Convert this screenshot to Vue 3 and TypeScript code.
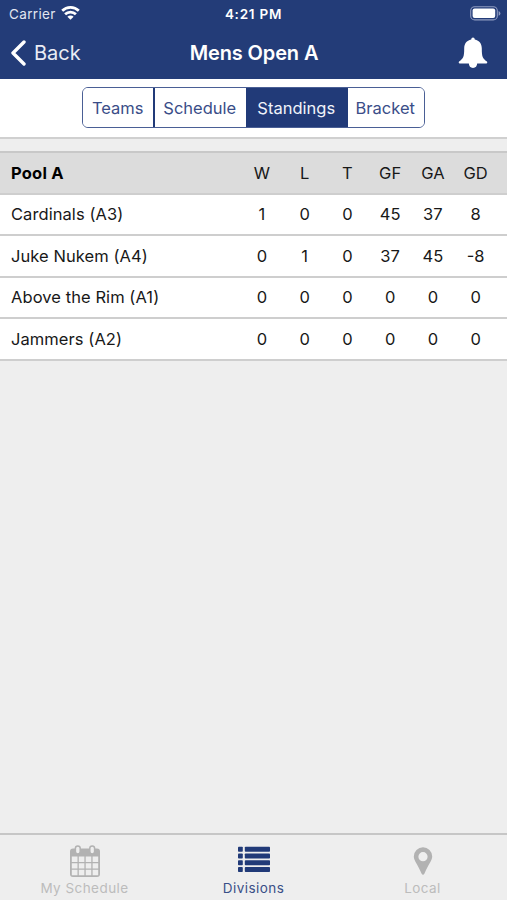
<script setup lang="ts">
interface Team {
  name: string
  stats: number[]
}

const segments: { label: string; width: number }[] = [
  { label: 'Teams', width: 69.5 },
  { label: 'Schedule', width: 93.5 },
  { label: 'Standings', width: 99.5 },
  { label: 'Bracket', width: 78.5 },
]
const active = 'Standings'

const columns = ['W', 'L', 'T', 'GF', 'GA', 'GD']
const teams: Team[] = [
  { name: 'Cardinals (A3)', stats: [1, 0, 0, 45, 37, 8] },
  { name: 'Juke Nukem (A4)', stats: [0, 1, 0, 37, 45, -8] },
  { name: 'Above the Rim (A1)', stats: [0, 0, 0, 0, 0, 0] },
  { name: 'Jammers (A2)', stats: [0, 0, 0, 0, 0, 0] },
]
</script>

<template>
  <div class="screen">
    <header class="top">
      <div class="status">
        <div class="carrier">
          <span>Carrier</span>
          <svg class="wifi" width="19" height="15" viewBox="0 0 19 15" fill="none" stroke="#fff" stroke-width="2.7">
            <path d="M1.2 5.7a11.800 11.800 0 0 1 16.600 0" />
            <path d="M4.100 9.300a7.600 7.600 0 0 1 10.800 0" />
            <path d="M6.400 11.700a4.400 4.400 0 0 1 6.200 0L9.500 14.800z" fill="#fff" stroke="none" />
          </svg>
        </div>
        <div class="time">4:21 PM</div>
        <svg class="battery" width="31" height="15" viewBox="0 0 31 15">
          <rect x="0.7" y="0.7" width="26.6" height="13.2" rx="4" fill="none" stroke="#8f9bc0" stroke-width="1.1" />
          <rect x="2.6" y="2.6" width="22.6" height="9.4" rx="2" fill="#fff" />
          <path d="M28.6 5v4.8q1.8-.8 1.8-2.4T28.6 5z" fill="#8f9bc0" />
        </svg>
      </div>
      <nav class="nav">
        <div class="back">
          <svg width="16" height="26" viewBox="0 0 16 26" fill="none" stroke="#fff" stroke-width="3.4" stroke-linecap="round" stroke-linejoin="round">
            <path d="M14 2L3 13l11 11" />
          </svg>
          <span>Back</span>
        </div>
        <h1>Mens Open A</h1>
        <svg class="bell" width="30" height="32" viewBox="0 0 30 32" fill="#fff">
          <path d="M15 .5q1.700 0 1.800 2.100c4.600.9 7 4.300 7 9 0 8 .8 10.200 5.100 12.900.7.5.4 1.900-.6 1.900H1.700c-1 0-1.300-1.400-.6-1.900 4.300-2.700 5.100-4.900 5.100-12.900 0-4.700 2.400-8.100 7-9Q13.300.5 15 .5z" />
          <path d="M10.800 26h8.400q-.2 4.900-4.200 4.900t-4.200-4.900z" />
        </svg>
      </nav>
    </header>

    <div class="filter">
      <div class="segments">
        <button
          v-for="s in segments"
          :key="s.label"
          :class="{ on: s.label === active }"
          :style="{ width: s.width + 'px' }"
        >{{ s.label }}</button>
      </div>
    </div>

    <main class="content">
      <section class="table">
        <div class="row head">
          <div class="name">Pool A</div>
          <div v-for="c in columns" :key="c" class="cell">{{ c }}</div>
        </div>
        <div v-for="t in teams" :key="t.name" class="row">
          <div class="name">{{ t.name }}</div>
          <div v-for="(v, i) in t.stats" :key="i" class="cell">{{ v }}</div>
        </div>
      </section>
    </main>

    <footer class="tabs">
      <div class="tab">
        <svg width="32" height="34" viewBox="0 0 32 34">
          <path fill="#b2b2b2" fill-rule="evenodd" d="M4 4.500h24q3 0 3 3v22.500q0 3-3 3H4q-3 0-3-3V7.500q0-3 3-3zM2.800 12.600V18h5.700v-5.400zm7 0V18h5.600v-5.400zm6.900 0V18h5.600v-5.400zm6.900 0V18h5.600v-5.400zM2.800 19.300v5.200h5.700v-5.200zm7 0v5.200h5.600v-5.200zm6.900 0v5.200h5.600v-5.200zm6.900 0v5.200h5.600v-5.200zM2.800 25.800v5.400h5.700v-5.400zm7 0v5.400h5.600v-5.400zm6.900 0v5.400h5.600v-5.400zm6.900 0v5.400h5.600v-5.400z" />
          <rect x="6.400" y="1.900" width="4.800" height="8" rx="2.400" fill="#eee" stroke="#b2b2b2" stroke-width="1.500" />
          <rect x="20.800" y="1.900" width="4.800" height="8" rx="2.400" fill="#eee" stroke="#b2b2b2" stroke-width="1.500" />
        </svg>
        <span>My Schedule</span>
      </div>
      <div class="tab current">
        <svg width="32" height="34" viewBox="0 0 32 34" fill="#213a78">
          <g v-for="n in 4" :key="n" :transform="`translate(0 ${(n - 1) * 6.8})`">
            <rect x="0" y="2.700" width="4.800" height="5" rx=".8" />
            <rect x="6.800" y="2.700" width="25.200" height="5" rx=".8" />
          </g>
        </svg>
        <span>Divisions</span>
      </div>
      <div class="tab">
        <svg width="32" height="34" viewBox="0 0 32 34">
          <path fill="#b2b2b2" fill-rule="evenodd" d="M16 3.200a9.200 9.200 0 0 1 9.200 9.200c0 4.200-3.800 7.500-7.700 17.100q-1.500 2.600-3 0C10.600 19.900 6.800 16.600 6.800 12.400A9.200 9.200 0 0 1 16 3.200zM16 8.100a4.600 4.600 0 1 0 0 9.200a4.600 4.600 0 0 0 0-9.200z" />
        </svg>
        <span>Local</span>
      </div>
    </footer>
  </div>
</template>

<style>
body {
  margin: 0;
}
</style>

<style scoped>
.screen {
  width: 507px;
  height: 900px;
  display: flex;
  flex-direction: column;
  background: #eee;
  color: #181818;
  font-family: Inter, "Liberation Sans", sans-serif;
  overflow: hidden;
}
.top {
  height: 79px;
  box-sizing: border-box;
  flex: none;
  background: #233c78;
  color: #fff;
}
.status {
  height: 27px;
  display: grid;
  grid-template-columns: 1fr auto 1fr;
  align-items: center;
  padding: 0 6px 0 9px;
  font-size: 13.5px;
}
.carrier {
  display: flex;
  align-items: center;
  gap: 5.5px;
  color: #e2e6f0;
  letter-spacing: 0.35px;
}
.wifi {
  margin-top: -2px;
}
.time {
  margin-right: 3px;
  font-weight: 600;
  letter-spacing: 0.75px;
}
.battery {
  justify-self: end;
}
.nav {
  height: 51px;
  display: grid;
  grid-template-columns: 1fr auto 1fr;
  align-items: center;
  padding: 0 19px 0 10px;
}
.back {
  display: flex;
  align-items: center;
  gap: 8px;
  font-size: 20px;
  color: #e9ecf5;
}
h1 {
  margin: 0 0 0 10px;
  font-size: 20px;
  line-height: 24px;
  font-weight: 600;
  letter-spacing: -0.13px;
}
.bell {
  justify-self: end;
}
.filter {
  height: 60px;
  box-sizing: border-box;
  flex: none;
  display: flex;
  justify-content: center;
  padding-top: 8px;
  background: #fff;
  border-bottom: 2px solid #d0d0d0;
}
.segments {
  display: flex;
  width: 343px;
  height: 41px;
  box-sizing: border-box;
  border: 1px solid #4a5f95;
  border-radius: 6px;
  overflow: hidden;
}
button {
  flex: none;
  box-sizing: border-box;
  margin: 0;
  padding: 0;
  border: 0;
  background: #fff;
  color: #3a4d88;
  font: 400 16.5px Inter, "Liberation Sans", sans-serif;
}
button + button {
  border-left: 2px solid #213a78;
  padding-right: 1px;
}
button.on {
  background: #213a78;
  color: #f0f3fa;
}
.content {
  flex: 1;
  padding-top: 12px;
}
.table {
  border-top: 2px solid #c8c8c8;
}
.row {
  display: flex;
  align-items: center;
  height: 41.5px;
  box-sizing: border-box;
  padding: 0 10px 0 11px;
  border-bottom: 2px solid #cecece;
  background: #fff;
  font-size: 16.5px;
}
.head {
  background: #dcdcdc;
}
.name {
  flex: 1;
  letter-spacing: 0.07px;
}
.head .name {
  font-weight: 700;
  letter-spacing: 0.2px;
  color: #000;
}
.cell {
  width: 42.75px;
  text-align: center;
}
.tabs {
  height: 67px;
  box-sizing: border-box;
  flex: none;
  display: flex;
  border-top: 2px solid #c6c6c6;
}
.tab {
  flex: 1;
  display: flex;
  flex-direction: column;
  align-items: center;
  padding-top: 9px;
  color: #bcbcbc;
  font-size: 13.5px;
  line-height: 20px;
  letter-spacing: 0.45px;
}
.current {
  color: #3a4f87;
}
</style>
